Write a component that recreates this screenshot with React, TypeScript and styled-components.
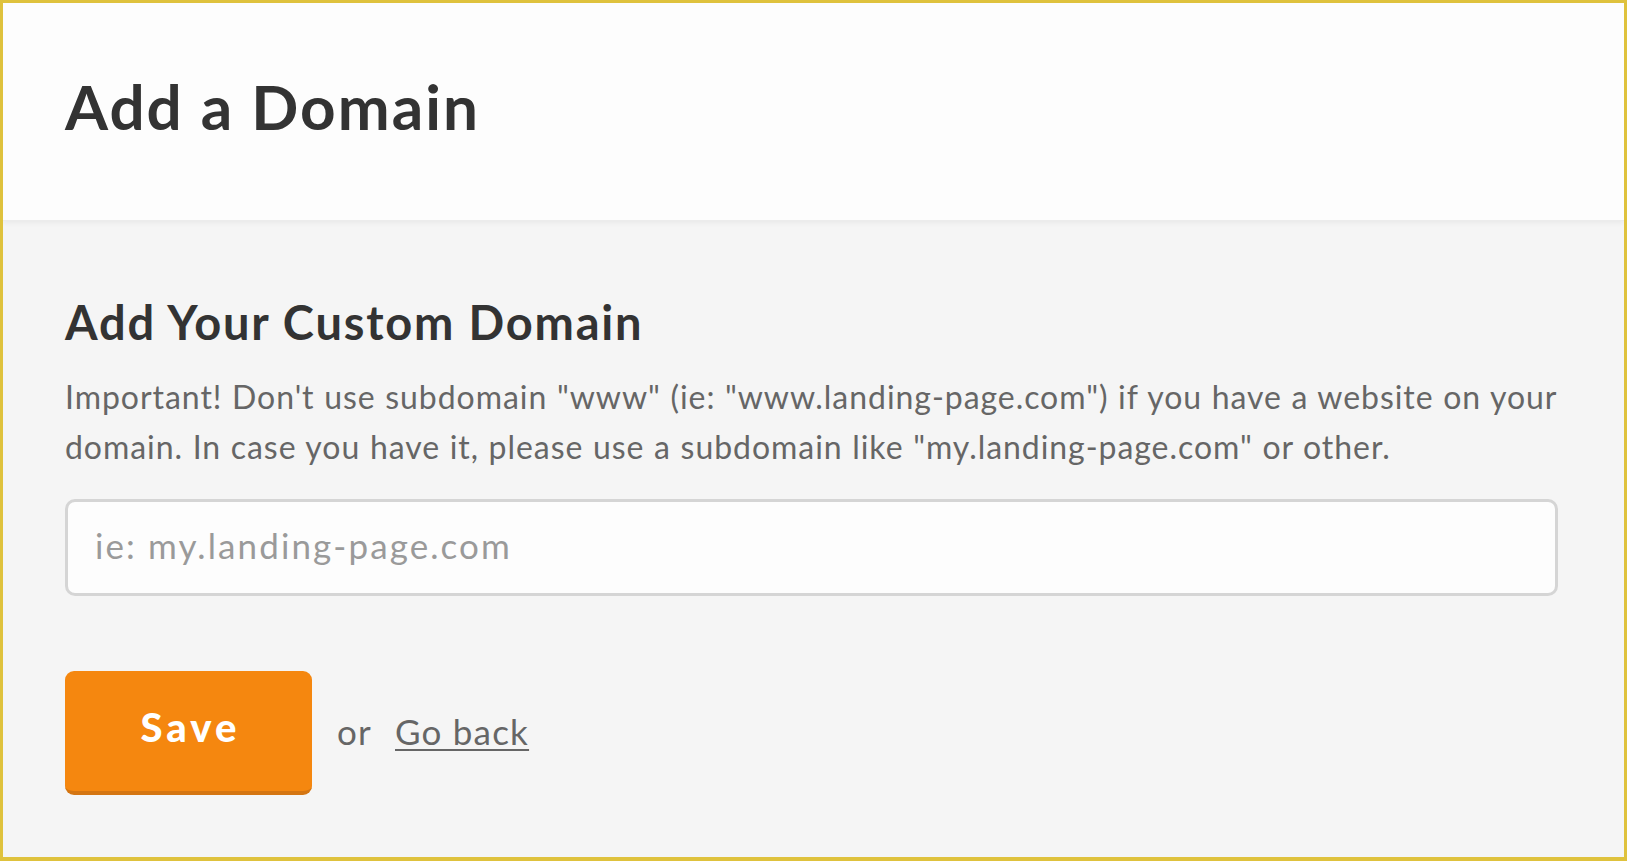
import React from "react";
import styled, { createGlobalStyle } from "styled-components";

const GlobalStyle = createGlobalStyle`
  html, body { margin: 0; padding: 0; }
  body { background: #f5f5f5; font-family: Lato, "Open Sans", Arial, sans-serif; }
  * { box-sizing: border-box; }
`;

const Frame = styled.div`
  height: 861px;
  border: 3px solid #dfc23d;
  border-bottom-width: 4px;
  display: flex;
  flex-direction: column;
  background: #f5f5f5;
  overflow: hidden;
`;

const Header = styled.header`
  height: 218px;
  flex: none;
  background: #fdfdfd;
  padding: 72px 62px 0;
  border-bottom: 1px solid #ececec;
  box-shadow: 0 2px 5px rgba(0, 0, 0, 0.05);
  position: relative;
  z-index: 1;
`;

const Title = styled.h1`
  margin: 0;
  font-size: 62px;
  line-height: 62px;
  font-weight: 700;
  letter-spacing: 2px;
  color: #333333;
`;

const Main = styled.main`
  flex: 1;
  padding: 78px 66px 0 62px;
`;

const Subtitle = styled.h2`
  margin: 0;
  font-size: 47px;
  line-height: 46px;
  font-weight: 700;
  letter-spacing: 1.8px;
  color: #333333;
`;

const Note = styled.p`
  margin: 27px 0 0;
  font-size: 32px;
  line-height: 50px;
  letter-spacing: 0.95px;
  word-spacing: 0.5px;
  color: #666666;
  white-space: nowrap;
`;

const DomainInput = styled.input`
  display: block;
  width: 100%;
  height: 97px;
  margin-top: 27px;
  padding: 0 27px 6px;
  border: 3px solid #d5d5d5;
  border-radius: 10px;
  background: #fdfdfd;
  font-family: Lato, "Open Sans", Arial, sans-serif;
  font-size: 35px;
  letter-spacing: 2.1px;
  color: #333;
  outline: none;
  &::placeholder { color: #9a9a9a; }
`;

const Actions = styled.div`
  display: flex;
  align-items: center;
  margin-top: 75px;
`;

const SaveButton = styled.button`
  width: 247px;
  height: 124px;
  padding: 0 0 9px 4px;
  border: none;
  border-bottom: 4px solid #d47512;
  border-radius: 9px;
  background: #f5870f;
  color: #ffffff;
  font-family: Lato, "Open Sans", Arial, sans-serif;
  font-size: 40px;
  font-weight: 900;
  letter-spacing: 4px;
  cursor: pointer;
`;

const Or = styled.span`
  margin: 0 0 4px 25px;
  font-size: 35px;
  letter-spacing: 1.2px;
  color: #666666;
`;

const BackLink = styled.a`
  margin: 0 0 4px 23px;
  font-size: 35px;
  letter-spacing: 1.2px;
  color: #666666;
  text-decoration: underline;
  text-decoration-thickness: 2px;
  text-underline-offset: 4px;
  cursor: pointer;
`;

export default function App() {
  return (
    <>
      <GlobalStyle />
      <Frame>
        <Header>
          <Title>Add a Domain</Title>
        </Header>
        <Main>
          <Subtitle>Add Your Custom Domain</Subtitle>
          <Note>
            Important! Don't use subdomain "www" (ie: "www.landing-page.com") if you have a website on your
            <br />
            domain. In case you have it, please use a subdomain like "my.landing-page.com" or other.
          </Note>
          <DomainInput placeholder="ie: my.landing-page.com" />
          <Actions>
            <SaveButton>Save</SaveButton>
            <Or>or</Or>
            <BackLink>Go back</BackLink>
          </Actions>
        </Main>
      </Frame>
    </>
  );
}
